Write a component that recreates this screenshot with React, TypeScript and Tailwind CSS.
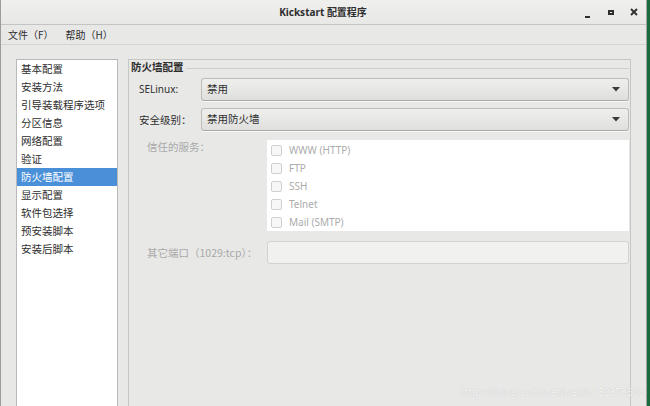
import React from "react";

const cjk = "font-['Noto_Sans_CJK_SC','Noto_Sans',sans-serif]";
const lat = "font-['Noto_Sans','Noto_Sans_CJK_SC',sans-serif]";

const navItems = [
  "基本配置",
  "安装方法",
  "引导装载程序选项",
  "分区信息",
  "网络配置",
  "验证",
  "防火墙配置",
  "显示配置",
  "软件包选择",
  "预安装脚本",
  "安装后脚本",
];

const services = ["WWW (HTTP)", "FTP", "SSH", "Telnet", "Mail (SMTP)"];

function Arrow() {
  return (
    <svg width="8" height="5" viewBox="0 0 8 5" className="shrink-0">
      <path d="M0 0 L8 0 L4 4.5 Z" fill="#3a3a3a" />
    </svg>
  );
}

function Combo({ value }: { value: string }) {
  return (
    <div className="flex-1 h-[23px] rounded-[3px] border border-[#bdbdbd] border-b-[#a9a9a9] bg-gradient-to-b from-[#efefee] to-[#dfdfde] shadow-[0_1px_0_rgba(255,255,255,0.7)] flex items-center pl-[5px] pr-[8px]">
      <span className={`${cjk} text-[10.5px] text-[#2e2e2e] flex-1 leading-none`}>{value}</span>
      <Arrow />
    </div>
  );
}

export default function App() {
  return (
    <div className="w-[650px] h-[406px] bg-[#e8e8e7] flex overflow-hidden relative">
      <div className="flex-1 flex flex-col border-l border-[#9c9c9c] min-w-0">
        {/* Title bar */}
        <div className="h-[25px] shrink-0 flex items-center bg-gradient-to-b from-[#efefee] to-[#e8e8e7] border-b border-[#c4c4c3]">
          <div className="flex-1" />
          <div className={`${lat} text-[10px] font-bold text-[#2e2e2e] leading-none`}>
            Kickstart <span className={cjk}>配置程序</span>
          </div>
          <div className="flex-1 flex justify-end items-center pr-[1px]">
            <div className="w-[23px] h-[20px] flex items-end justify-center pb-[4px]">
              <div className="w-[5px] h-[2px] bg-[#2e2e2e]" />
            </div>
            <div className="w-[23px] h-[20px] flex items-center justify-center">
              <div className="w-[6px] h-[5px] border-[2px] border-[#2e2e2e]" />
            </div>
            <div className="w-[23px] h-[20px] flex items-center justify-center">
              <svg width="8" height="8" viewBox="0 0 8 8">
                <path d="M1 1 L7 7 M7 1 L1 7" stroke="#2e2e2e" strokeWidth="1.8" />
              </svg>
            </div>
          </div>
        </div>

        {/* Menu bar */}
        <div className={`${cjk} h-[20px] shrink-0 flex items-center gap-[12px] pl-[7px] text-[10px] text-[#2e2e2e] border-b border-[#d4d4d3]`}>
          <span>文件（F）</span>
          <span>帮助（H）</span>
        </div>

        {/* Body */}
        <div className="flex-1 flex pt-[14px] pl-[15px] pr-[15px] gap-[10px] min-h-0">
          {/* Nav list */}
          <div className="w-[102px] bg-white border border-[#b9b9b9] border-b-0 flex flex-col">
            {navItems.map((item, i) => (
              <div
                key={item}
                className={`${cjk} h-[18px] flex items-center pl-[4px] text-[10.5px] leading-none ${
                  i === 6 ? "bg-[#4a90d9] text-white" : "text-[#2e2e2e]"
                }`}
              >
                {item}
              </div>
            ))}
          </div>

          {/* Main panel */}
          <div className="flex-1 border border-[#c6c6c5] border-b-0 flex flex-col pl-[2px] pr-[1px]">
            <div className="h-[15px] flex items-center">
              <span className={`${cjk} text-[10.5px] font-bold text-[#2e2e2e] leading-none`}>防火墙配置</span>
              <div className="flex-1 h-px bg-[#cfcfce] ml-[2px] mt-[2px]" />
            </div>

            <div className="flex items-center mt-[3px]">
              <span className={`${lat} w-[70px] pl-[8px] text-[10px] text-[#2e2e2e]`}>SELinux:</span>
              <Combo value="禁用" />
            </div>

            <div className="flex items-center mt-[7px]">
              <span className={`${cjk} w-[70px] pl-[8px] text-[10.5px] text-[#2e2e2e]`}>安全级别：</span>
              <Combo value="禁用防火墙" />
            </div>

            <div className="flex mt-[9px]">
              <div className={`${cjk} w-[136px] pl-[16px] text-[10.5px] leading-[14px] text-[#a9a9a9]`}>信任的服务：</div>
              <div className="flex-1 h-[91px] bg-white flex flex-col pt-[1px]">
                {services.map((s) => (
                  <div key={s} className="h-[18px] flex items-center pl-[4px] gap-[7px]">
                    <div className="w-[11px] h-[11px] rounded-[2px] border border-[#cfcfcf] bg-[#f7f7f7]" />
                    <span className={`${lat} text-[10px] text-[#ababab] leading-none`}>{s}</span>
                  </div>
                ))}
              </div>
            </div>

            <div className="flex items-center mt-[10px]">
              <div className={`${cjk} w-[136px] pl-[16px] text-[10.5px] text-[#a9a9a9]`}>
                其它端口（1029:tcp）：
              </div>
              <div className="flex-1 h-[23px] rounded-[3px] border border-[#d2d2d1] bg-[#f1f1f0]" />
            </div>
          </div>
        </div>
      </div>

      {/* Right window edge */}
      <div className="w-[1px] bg-[#a5a5a5]" />
      <div className="w-[3px] bg-[#1b6b3c]" />

      {/* Watermark */}
      <div className={`${lat} absolute right-[6px] bottom-[6px] text-[10px] text-[#f4f4f4] [text-shadow:0_0_1px_rgba(150,150,150,0.5)]`}>
        https://blog.csdn.net/weixin_52373606
      </div>
    </div>
  );
}
